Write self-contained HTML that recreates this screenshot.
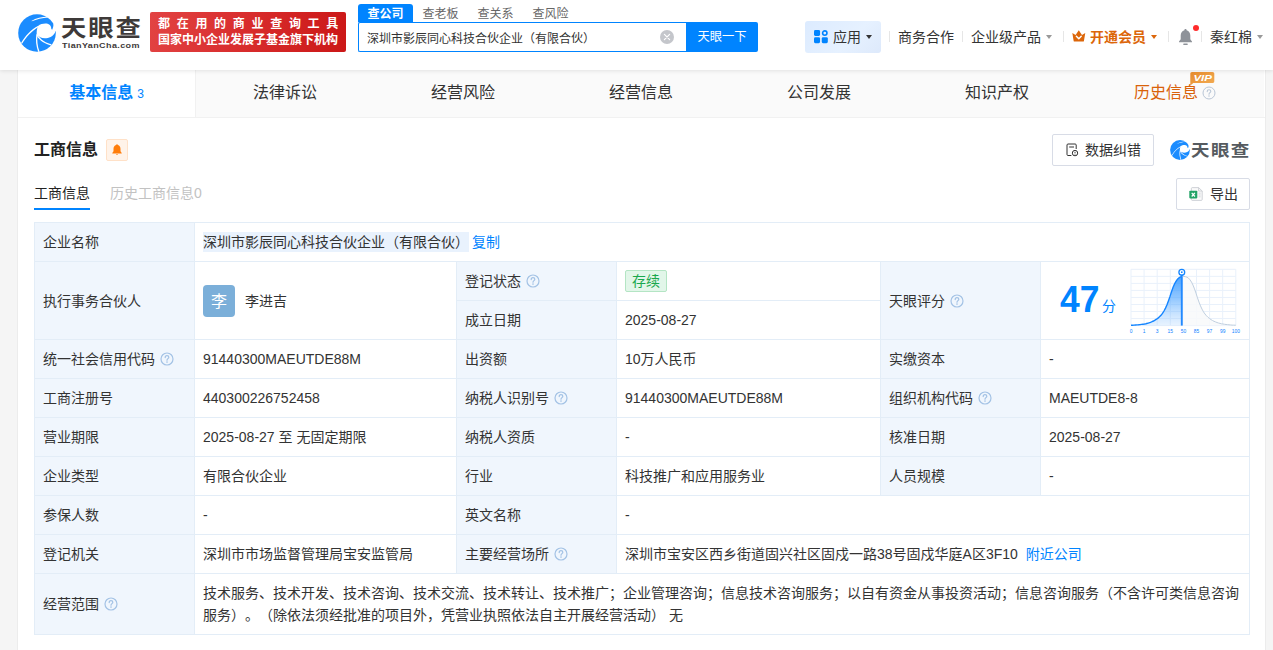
<!DOCTYPE html>
<html lang="zh-CN">
<head>
<meta charset="utf-8">
<title>天眼查 - 深圳市影辰同心科技合伙企业（有限合伙）</title>
<style>
*{box-sizing:border-box;margin:0;padding:0}
html,body{width:1273px;height:650px;overflow:hidden}
body{text-spacing-trim:space-all;background:#f5f5f5;font-family:"Liberation Sans","Noto Sans CJK SC",sans-serif;font-size:14px;color:#333;position:relative}
.abs{position:absolute}
/* ---------- header ---------- */
#hd{position:absolute;left:0;top:0;width:1273px;height:70px;background:#fff;box-shadow:0 1px 4px rgba(0,0,0,.10);z-index:5}
#logo-ic{left:18px;top:14px;width:38px;height:38px}
#logo-cn{left:61px;top:11px;font-size:23px;line-height:34px;font-weight:700;color:#3e3a39;letter-spacing:1.73px;white-space:nowrap;transform:scaleX(1.1);transform-origin:0 0}
#logo-en{left:62px;top:40px;font-size:7.5px;line-height:12px;font-weight:700;color:#3e3a39;letter-spacing:.33px;white-space:nowrap;transform:scaleX(1.2);transform-origin:0 0}
#slogan{left:150px;top:12px;width:196px;height:40px;border-radius:2px;background:linear-gradient(100deg,#e24343 0%,#d82c2c 50%,#cb1717 100%);color:#fff;font-weight:700;font-size:12px;line-height:16px;padding:4px 0 0 8px;white-space:nowrap}
#slogan .l1{letter-spacing:6.7px}
.stab{top:4px;height:18px;width:55px;text-align:center;font-size:12px;line-height:18px;padding-top:1px;overflow:hidden;color:#666}
.stab.on{background:#0084ff;color:#fff;font-weight:700;border-radius:3px 3px 0 0}
#sinput{left:358px;top:22px;width:329px;height:30px;border:1px solid #0084ff;border-right:0;border-radius:2px 0 0 2px;background:#fff;font-size:12px;line-height:32px;padding-left:8px;color:#333;white-space:nowrap;overflow:hidden}
#sbtn{left:686px;top:22px;width:72px;height:30px;background:#0084ff;color:#fff;font-size:12.3px;line-height:30px;text-align:center;border-radius:0 2px 2px 0}
#sclear{left:660px;top:30px;width:14px;height:14px}
.nav{top:26px;height:22px;line-height:22px;font-size:14px;color:#333;white-space:nowrap}
.vdiv{top:31px;width:1px;height:11px;background:#e6e6e6}
.caret{width:0;height:0;border-left:3.5px solid transparent;border-right:3.5px solid transparent;border-top:4px solid #999}
#app{left:805px;top:21px;width:76px;height:32px;border-radius:3px;background:linear-gradient(135deg,#dcebff 0%,#e6f1ff 60%,#dde9fb 100%)}
/* ---------- main ---------- */
#main{position:absolute;left:18px;top:70px;width:1247px;height:580px;background:#fff;box-shadow:-1px 0 0 #ececec,1px 0 0 #ececec}
#tabs{position:absolute;left:0;top:0;width:1247px;height:48px;background:#fff;border-bottom:1px solid #f1f1f1}
.tab{position:absolute;top:0;height:47px;width:178px;text-align:center;font-size:16px;line-height:45px;color:#333;white-space:nowrap;background:#fafafa}
.tab.on{background:#fff;color:#0084ff;font-weight:700;border-right:1px solid #f1f1f1;width:178px}
.tab.on small{font-size:12px;font-weight:400;margin-left:4px}
.tab.vip{color:#d9620a}
#sec-title{left:34px;top:138px;font-size:16px;line-height:24px;font-weight:700;color:#222}
#sec-bell{left:106px;top:139px;width:22px;height:22px;border:1px solid #ffe1c8;border-radius:2px;background:#fff3e9}
.sub{top:182px;font-size:14px;line-height:22px;white-space:nowrap}
#sub-line{left:34px;top:208px;width:56px;height:2px;background:#0084ff}
.btn{border:1px solid #d8dce6;border-radius:2px;background:#fff;font-size:14px;color:#333;white-space:nowrap}

#info{left:34px;top:222px;width:1216px;table-layout:fixed;border-collapse:separate;border-spacing:0;border-right:1px solid #e3edf7;border-bottom:1px solid #e3edf7;font-size:14px;line-height:22px;color:#333}
#info td{border-left:1px solid #e3edf7;border-top:1px solid #e3edf7;padding:8px 8px 8px 8px;vertical-align:middle;background:#fff;word-break:break-all}
#info td.k{background:#f0f6fd}
.q{width:14px;height:14px;vertical-align:-2px;margin-left:5px}
.hl{background:#e9f2fd;padding:2px 0}
.lnk{color:#0084ff}
.ava{display:inline-block;width:32px;height:32px;border-radius:4px;background:#7bafd9;color:#fff;font-size:16px;line-height:33px;text-align:center;vertical-align:middle}
.pname{vertical-align:middle;margin-left:10px}
.tag{display:inline-block;height:22px;line-height:20px;padding:0 6px;border:1px solid #b4e5c4;border-radius:2px;background:#e2f6e9;color:#1aa84d;font-size:14px;vertical-align:top;position:relative;top:0}
.score{left:1060.3px;top:278.4px;transform:scale(1.012,1.078);transform-origin:0 0;font-size:35px;font-weight:700;color:#0084ff;line-height:40px;white-space:nowrap}
.fen{left:1102px;top:295px;font-size:14px;line-height:22px;color:#0084ff}
</style>
</head>
<body>

<div id="hd">
  <!-- logo -->
  <svg id="logo-ic" class="abs" viewBox="0 0 38 38"><g>
    <circle cx="19" cy="19" r="18.8" fill="#1b8cff"/>
    <path d="M20.1 11.9 C22.6 10 26.5 9.2 29.6 9.8 C32 10.4 33.4 12.6 33.3 14.9 L34.2 15.7 C35 14 35.6 12 35.4 9.6 L39 9 L39 17 L37.6 16.9 C36.8 19.6 35 21.6 32.6 22.9 C29.5 24.5 25 24.6 22.2 23.3 C20.6 22.5 19.3 21.3 18.7 20.1 C18.5 17 19.1 14 20.1 11.9Z" fill="#fff"/>
    <path d="M3.1 28.9 C7 22 13 15.5 20.3 11.7 L20.6 12.9 C14 16.5 8 23 3.9 29.9Z" fill="#fff"/>
    <path d="M20.2 37.9 C18.1 32 17.4 26 18.4 20 L19.7 20.4 C18.7 26 19.5 32 21.5 37.6Z" fill="#fff"/>
    <path d="M33.6 30.2 C28.5 29.2 22.5 26 19.3 20.2 L18.7 21.6 C21.5 26.9 27.5 30.3 32.8 31.4Z" fill="#fff"/>
    <path d="M13.4 6.9 C18 4.2 24 2.9 29.5 2.8 L30.1 3.5 C24.5 3.8 18.5 5.3 13.9 7.3Z" fill="#fff"/>
  </g></svg>
  <div id="logo-cn" class="abs">天眼查</div>
  <div id="logo-en" class="abs">TianYanCha.com</div>
  <div id="slogan" class="abs"><div class="l1">都在用的商业查询工具</div><div class="l2">国家中小企业发展子基金旗下机构</div></div>

  <!-- search -->
  <div class="abs stab on" style="left:358px">查公司</div>
  <div class="abs stab" style="left:413px">查老板</div>
  <div class="abs stab" style="left:468px">查关系</div>
  <div class="abs stab" style="left:523px">查风险</div>
  <div id="sinput" class="abs">深圳市影辰同心科技合伙企业（有限合伙）</div>
  <svg id="sclear" class="abs" viewBox="0 0 14 14"><circle cx="7" cy="7" r="7" fill="#c4c6cb"/><path d="M4.4 4.4 L9.6 9.6 M9.6 4.4 L4.4 9.6" stroke="#fff" stroke-width="1.2" stroke-linecap="round"/></svg>
  <div id="sbtn" class="abs">天眼一下</div>

  <!-- right nav -->
  <div id="app" class="abs"></div>
  <svg class="abs" style="left:814px;top:30.3px;width:14.2px;height:13.4px" viewBox="0 0 15 14">
    <rect x="0" y="0" width="6.4" height="6.2" rx="1.4" fill="#0084ff"/>
    <rect x="0" y="7.6" width="6.4" height="6.2" rx="1.4" fill="#0084ff"/>
    <rect x="8.2" y="7.6" width="6.4" height="6.2" rx="1.4" fill="#0084ff"/>
    <circle cx="11.4" cy="3.1" r="2.3" fill="none" stroke="#0084ff" stroke-width="1.7"/>
  </svg>
  <div class="abs nav" style="left:833px">应用</div>
  <div class="abs caret" style="left:866px;top:35px;border-top-color:#333"></div>
  <div class="abs vdiv" style="left:889px"></div>
  <div class="abs nav" style="left:898px">商务合作</div>
  <div class="abs vdiv" style="left:962px"></div>
  <div class="abs nav" style="left:971px">企业级产品</div>
  <div class="abs caret" style="left:1046px;top:35px"></div>
  <div class="abs vdiv" style="left:1063px"></div>
  <svg class="abs" style="left:1072.2px;top:30.3px;width:13.6px;height:11.6px" viewBox="0 0 14 12">
    <path d="M0.3 3 L3.7 5.3 L7 0.2 L10.3 5.3 L13.7 3 L12.3 11.4 Q12.2 12 11.6 12 L2.4 12 Q1.8 12 1.7 11.4 Z" fill="#dc660a"/>
    <path d="M4.5 6.4 L7 9 L9.5 6.4" fill="none" stroke="#fff" stroke-width="1.5" stroke-linecap="round" stroke-linejoin="round"/>
  </svg>
  <div class="abs nav" style="left:1090px;color:#dc660a;font-weight:700">开通会员</div>
  <div class="abs caret" style="left:1151px;top:35px;border-top-color:#dc660a"></div>
  <div class="abs vdiv" style="left:1168px"></div>
  <svg class="abs" style="left:1178px;top:28px;width:15px;height:18px" viewBox="0 0 15 18">
    <path d="M7.5 1 C8.2 1 8.6 1.5 8.6 2.2 C11 2.9 12.3 5 12.3 7.6 L12.3 11.2 L14 13.6 L14 14.2 L1 14.2 L1 13.6 L2.7 11.2 L2.7 7.6 C2.7 5 4 2.9 6.4 2.2 C6.4 1.5 6.8 1 7.5 1Z" fill="#8e9299"/>
    <rect x="5.2" y="15.6" width="4.6" height="1.3" rx=".6" fill="#8e9299"/>
  </svg>
  <div class="abs" style="left:1193px;top:25px;width:6px;height:6px;border-radius:50%;background:#ff2b2b"></div>
  <div class="abs vdiv" style="left:1201px"></div>
  <div class="abs nav" style="left:1210px">秦红棉</div>
  <div class="abs caret" style="left:1257px;top:35px"></div>
</div>

<div id="main">
  <div id="tabs">
    <div class="tab on" style="left:0">基本信息<small>3</small></div>
    <div class="tab" style="left:178px">法律诉讼</div>
    <div class="tab" style="left:356px">经营风险</div>
    <div class="tab" style="left:534px">经营信息</div>
    <div class="tab" style="left:712px">公司发展</div>
    <div class="tab" style="left:890px">知识产权</div>
    <div class="tab vip" style="left:1068px;padding-right:18px">历史信息</div>
  </div>
</div>

<!-- section header (page coordinates) -->
<div id="sec-title" class="abs">工商信息</div>
<div id="sec-bell" class="abs"></div>
<div class="abs sub" style="left:34px;color:#222">工商信息</div>
<div class="abs sub" style="left:110px;color:#c2c2c2">历史工商信息0</div>
<div id="sub-line" class="abs"></div>


<table id="info" class="abs" cellspacing="0" cellpadding="0">
<colgroup><col style="width:160px"><col style="width:262px"><col style="width:160px"><col style="width:264px"><col style="width:160px"><col style="width:209px"></colgroup>
<tr><td class="k">企业名称</td><td colspan="5"><span class="hl">深圳市影辰同心科技合伙企业（有限合伙）</span><span class="lnk" style="margin-left:3px">复制</span></td></tr>
<tr><td class="k" rowspan="2">执行事务合伙人</td><td rowspan="2"><span class="ava">李</span><span class="pname">李进吉</span></td><td class="k">登记状态<svg class="q" viewBox="0 0 14 14"><circle cx="7" cy="7" r="6" fill="none" stroke="#a3c2e5" stroke-width="1.2"/><path d="M5.2 5.6 C5.2 4.3 6 3.7 7 3.7 C8.1 3.7 8.8 4.4 8.8 5.3 C8.8 6.6 7 6.7 7 8.2" fill="none" stroke="#a3c2e5" stroke-width="1.25" stroke-linecap="round"/><circle cx="7" cy="10.1" r=".8" fill="#a3c2e5"/></svg></td><td><span class="tag">存续</span></td><td class="k" rowspan="2">天眼评分<svg class="q" viewBox="0 0 14 14"><circle cx="7" cy="7" r="6" fill="none" stroke="#a3c2e5" stroke-width="1.2"/><path d="M5.2 5.6 C5.2 4.3 6 3.7 7 3.7 C8.1 3.7 8.8 4.4 8.8 5.3 C8.8 6.6 7 6.7 7 8.2" fill="none" stroke="#a3c2e5" stroke-width="1.25" stroke-linecap="round"/><circle cx="7" cy="10.1" r=".8" fill="#a3c2e5"/></svg></td><td rowspan="2"></td></tr>
<tr><td class="k">成立日期</td><td>2025-08-27</td></tr>
<tr><td class="k">统一社会信用代码<svg class="q" viewBox="0 0 14 14"><circle cx="7" cy="7" r="6" fill="none" stroke="#a3c2e5" stroke-width="1.2"/><path d="M5.2 5.6 C5.2 4.3 6 3.7 7 3.7 C8.1 3.7 8.8 4.4 8.8 5.3 C8.8 6.6 7 6.7 7 8.2" fill="none" stroke="#a3c2e5" stroke-width="1.25" stroke-linecap="round"/><circle cx="7" cy="10.1" r=".8" fill="#a3c2e5"/></svg></td><td>91440300MAEUTDE88M</td><td class="k">出资额</td><td>10万人民币</td><td class="k">实缴资本</td><td>-</td></tr>
<tr><td class="k">工商注册号</td><td>440300226752458</td><td class="k">纳税人识别号<svg class="q" viewBox="0 0 14 14"><circle cx="7" cy="7" r="6" fill="none" stroke="#a3c2e5" stroke-width="1.2"/><path d="M5.2 5.6 C5.2 4.3 6 3.7 7 3.7 C8.1 3.7 8.8 4.4 8.8 5.3 C8.8 6.6 7 6.7 7 8.2" fill="none" stroke="#a3c2e5" stroke-width="1.25" stroke-linecap="round"/><circle cx="7" cy="10.1" r=".8" fill="#a3c2e5"/></svg></td><td>91440300MAEUTDE88M</td><td class="k">组织机构代码<svg class="q" viewBox="0 0 14 14"><circle cx="7" cy="7" r="6" fill="none" stroke="#a3c2e5" stroke-width="1.2"/><path d="M5.2 5.6 C5.2 4.3 6 3.7 7 3.7 C8.1 3.7 8.8 4.4 8.8 5.3 C8.8 6.6 7 6.7 7 8.2" fill="none" stroke="#a3c2e5" stroke-width="1.25" stroke-linecap="round"/><circle cx="7" cy="10.1" r=".8" fill="#a3c2e5"/></svg></td><td>MAEUTDE8-8</td></tr>
<tr><td class="k">营业期限</td><td>2025-08-27 至 无固定期限</td><td class="k">纳税人资质</td><td>-</td><td class="k">核准日期</td><td>2025-08-27</td></tr>
<tr><td class="k">企业类型</td><td>有限合伙企业</td><td class="k">行业</td><td>科技推广和应用服务业</td><td class="k">人员规模</td><td>-</td></tr>
<tr><td class="k">参保人数</td><td>-</td><td class="k">英文名称</td><td colspan="3">-</td></tr>
<tr><td class="k">登记机关</td><td>深圳市市场监督管理局宝安监管局</td><td class="k">主要经营场所<svg class="q" viewBox="0 0 14 14"><circle cx="7" cy="7" r="6" fill="none" stroke="#a3c2e5" stroke-width="1.2"/><path d="M5.2 5.6 C5.2 4.3 6 3.7 7 3.7 C8.1 3.7 8.8 4.4 8.8 5.3 C8.8 6.6 7 6.7 7 8.2" fill="none" stroke="#a3c2e5" stroke-width="1.25" stroke-linecap="round"/><circle cx="7" cy="10.1" r=".8" fill="#a3c2e5"/></svg></td><td colspan="3">深圳市宝安区西乡街道固兴社区固戍一路38号固戍华庭A区3F10<span class="lnk" style="margin-left:8px">附近公司</span></td></tr>
<tr><td class="k">经营范围<svg class="q" viewBox="0 0 14 14"><circle cx="7" cy="7" r="6" fill="none" stroke="#a3c2e5" stroke-width="1.2"/><path d="M5.2 5.6 C5.2 4.3 6 3.7 7 3.7 C8.1 3.7 8.8 4.4 8.8 5.3 C8.8 6.6 7 6.7 7 8.2" fill="none" stroke="#a3c2e5" stroke-width="1.25" stroke-linecap="round"/><circle cx="7" cy="10.1" r=".8" fill="#a3c2e5"/></svg></td><td colspan="5">技术服务、技术开发、技术咨询、技术交流、技术转让、技术推广；企业管理咨询；信息技术咨询服务；以自有资金从事投资活动；信息咨询服务（不含许可类信息咨询服务）。（除依法须经批准的项目外，凭营业执照依法自主开展经营活动） 无</td></tr>
</table>
<svg class="abs" id="chart" style="left:1126px;top:264px;width:120px;height:74px" viewBox="0 0 120 74">
<defs><linearGradient id="gl" x1="0" y1="0" x2="0" y2="1"><stop offset="0" stop-color="#2f95ff" stop-opacity=".85"/><stop offset=".45" stop-color="#4aa3ff" stop-opacity=".6"/><stop offset="1" stop-color="#8cc4ff" stop-opacity=".2"/></linearGradient></defs>
<g stroke="#e9f1fb" stroke-width="1" fill="none"><path d="M5.00 5.3 V61.6"/><path d="M18.10 5.3 V61.6"/><path d="M31.20 5.3 V61.6"/><path d="M44.30 5.3 V61.6"/><path d="M57.40 5.3 V61.6"/><path d="M70.50 5.3 V61.6"/><path d="M83.60 5.3 V61.6"/><path d="M96.70 5.3 V61.6"/><path d="M109.80 5.3 V61.6"/><path d="M5.0 5.30 H109.8"/><path d="M5.0 12.34 H109.8"/><path d="M5.0 19.38 H109.8"/><path d="M5.0 26.41 H109.8"/><path d="M5.0 33.45 H109.8"/><path d="M5.0 40.49 H109.8"/><path d="M5.0 47.53 H109.8"/><path d="M5.0 54.56 H109.8"/><path d="M5.0 61.60 H109.8"/></g>
<path d="M55.8 12.6 L56.5 12.5 L58.0 12.4 L59.5 12.7 L61.0 13.2 L62.5 14.1 L64.0 15.8 L65.5 18.1 L67.0 21.1 L68.5 24.9 L70.0 29.2 L71.5 33.9 L73.0 38.1 L74.5 41.9 L76.0 45.1 L77.5 47.9 L79.0 50.0 L80.5 51.8 L82.0 53.3 L83.5 54.5 L85.0 55.6 L86.5 56.5 L88.0 57.3 L89.5 57.9 L91.0 58.5 L92.5 59.0 L94.0 59.4 L95.5 59.8 L97.0 60.0 L98.5 60.3 L100.0 60.5 L101.5 60.6 L103.0 60.8 L104.5 60.9 L106.0 61.1 L107.5 61.1 L109.0 61.2 L109.8 61.2 L109.8 61.6 L55.8 61.6 Z" fill="#f8f9fa" fill-opacity=".85"/>
<path d="M5.0 61.2 L6.5 61.2 L8.0 61.1 L9.5 61.0 L11.0 60.9 L12.5 60.8 L14.0 60.6 L15.5 60.4 L17.0 60.2 L18.5 60.0 L20.0 59.7 L21.5 59.3 L23.0 58.8 L24.5 58.3 L26.0 57.7 L27.5 57.0 L29.0 56.2 L30.5 55.2 L32.0 54.1 L33.5 52.8 L35.0 51.2 L36.5 49.4 L38.0 47.0 L39.5 44.1 L41.0 40.8 L42.5 36.7 L44.0 32.4 L45.5 27.7 L47.0 23.6 L48.5 20.0 L50.0 17.3 L51.5 15.1 L53.0 13.8 L54.5 13.0 L55.8 12.6 L55.8 61.6 L5.0 61.6 Z" fill="url(#gl)"/>
<path d="M55.8 12.6 L56.5 12.5 L58.0 12.4 L59.5 12.7 L61.0 13.2 L62.5 14.1 L64.0 15.8 L65.5 18.1 L67.0 21.1 L68.5 24.9 L70.0 29.2 L71.5 33.9 L73.0 38.1 L74.5 41.9 L76.0 45.1 L77.5 47.9 L79.0 50.0 L80.5 51.8 L82.0 53.3 L83.5 54.5 L85.0 55.6 L86.5 56.5 L88.0 57.3 L89.5 57.9 L91.0 58.5 L92.5 59.0 L94.0 59.4 L95.5 59.8 L97.0 60.0 L98.5 60.3 L100.0 60.5 L101.5 60.6 L103.0 60.8 L104.5 60.9 L106.0 61.1 L107.5 61.1 L109.0 61.2 L109.8 61.2" fill="none" stroke="#c0cfdf" stroke-width="1"/>
<path d="M5.0 61.2 L6.5 61.2 L8.0 61.1 L9.5 61.0 L11.0 60.9 L12.5 60.8 L14.0 60.6 L15.5 60.4 L17.0 60.2 L18.5 60.0 L20.0 59.7 L21.5 59.3 L23.0 58.8 L24.5 58.3 L26.0 57.7 L27.5 57.0 L29.0 56.2 L30.5 55.2 L32.0 54.1 L33.5 52.8 L35.0 51.2 L36.5 49.4 L38.0 47.0 L39.5 44.1 L41.0 40.8 L42.5 36.7 L44.0 32.4 L45.5 27.7 L47.0 23.6 L48.5 20.0 L50.0 17.3 L51.5 15.1 L53.0 13.8 L54.5 13.0 L55.8 12.6" fill="none" stroke="#1485ff" stroke-width="1.4"/>
<path d="M55.8 12.5 V61.6" stroke="#2189ff" stroke-width="1.9"/>
<circle cx="55.8" cy="8.2" r="2.9" fill="#fff" stroke="#1485ff" stroke-width="1.3"/>
<circle cx="55.8" cy="8.2" r=".9" fill="#1485ff"/>
<path d="M54.1 10.7 L55.8 13.2 L57.5 10.7Z" fill="#1485ff"/>
<g font-family="Liberation Sans, sans-serif" font-size="4.9" fill="#0f7fff" text-anchor="middle"><text x="5.0" y="69.1">0</text><text x="18.1" y="69.1">1</text><text x="31.2" y="69.1">3</text><text x="44.3" y="69.1">15</text><text x="57.4" y="69.1">50</text><text x="70.5" y="69.1">85</text><text x="83.6" y="69.1">97</text><text x="96.7" y="69.1">99</text><text x="109.8" y="69.1">100</text></g>
</svg>


<div class="abs score">47</div><div class="abs fen">分</div>

<!-- bell in section title -->
<svg class="abs" style="left:112px;top:144px;width:10px;height:11px" viewBox="0 0 10 11">
  <path d="M5 .2 C5.5 .2 5.9 .6 5.9 1.1 C7.6 1.6 8.5 3.1 8.5 4.9 V7.3 L9.7 8.9 V9.5 H.3 V8.9 L1.5 7.3 V4.9 C1.5 3.1 2.4 1.6 4.1 1.1 C4.1 .6 4.5 .2 5 .2Z" fill="#ff7d0a"/>
  <path d="M4.1 9.9 H5.9 C5.9 10.5 5.5 10.8 5 10.8 C4.5 10.8 4.1 10.5 4.1 9.9Z" fill="#ff7d0a"/>
</svg>

<!-- right buttons -->
<div class="abs btn" style="left:1052px;top:134px;width:102px;height:32px;line-height:30px;padding-left:32px">数据纠错</div>
<svg class="abs" style="left:1066px;top:143px;width:13px;height:14px" viewBox="0 0 13 14">
  <path d="M5.4 12.5 H2 C1.4 12.5 1 12.1 1 11.5 V2 C1 1.4 1.4 1 2 1 H9.2 C9.8 1 10.2 1.4 10.2 2 V6" fill="none" stroke="#333" stroke-width="1"/>
  <path d="M3.2 4 H8" stroke="#333" stroke-width="1"/>
  <circle cx="9" cy="10.1" r="2.7" fill="none" stroke="#333" stroke-width="1"/>
  <path d="M9 8.8 V10.4 M9 11.1 V11.6" stroke="#333" stroke-width=".9"/>
</svg>
<svg class="abs" style="left:1170px;top:140px;width:20px;height:20px" viewBox="0 0 38 38">
  <g><circle cx="19" cy="19" r="18.8" fill="#1b8cff"/>
    <path d="M20.1 11.9 C22.6 10 26.5 9.2 29.6 9.8 C32 10.4 33.4 12.6 33.3 14.9 L34.2 15.7 C35 14 35.6 12 35.4 9.6 L39 9 L39 17 L37.6 16.9 C36.8 19.6 35 21.6 32.6 22.9 C29.5 24.5 25 24.6 22.2 23.3 C20.6 22.5 19.3 21.3 18.7 20.1 C18.5 17 19.1 14 20.1 11.9Z" fill="#fff"/>
    <path d="M3.1 28.9 C7 22 13 15.5 20.3 11.7 L20.6 12.9 C14 16.5 8 23 3.9 29.9Z" fill="#fff"/>
    <path d="M20.2 37.9 C18.1 32 17.4 26 18.4 20 L19.7 20.4 C18.7 26 19.5 32 21.5 37.6Z" fill="#fff"/>
    <path d="M33.6 30.2 C28.5 29.2 22.5 26 19.3 20.2 L18.7 21.6 C21.5 26.9 27.5 30.3 32.8 31.4Z" fill="#fff"/>
    <path d="M13.4 6.9 C18 4.2 24 2.9 29.5 2.8 L30.1 3.5 C24.5 3.8 18.5 5.3 13.9 7.3Z" fill="#fff"/></g>
</svg>
<div class="abs" style="left:1191px;top:138.4px;font-size:16px;line-height:26px;font-weight:700;color:#565b60;letter-spacing:1.23px;white-space:nowrap;transform:scaleX(1.155);transform-origin:0 0">天眼查</div>
<div class="abs btn" style="left:1176px;top:178px;width:74px;height:32px;line-height:30px;padding-left:33px">导出</div>
<svg class="abs" style="left:1189px;top:187px;width:14px;height:14px" viewBox="0 0 14 14">
  <path d="M3.2 .6 H9.6 L13.2 4 V12.6 C13.2 13 12.9 13.4 12.4 13.4 H3.2 C2.8 13.4 2.4 13 2.4 12.6 V1.4 C2.4 1 2.8 .6 3.2 .6Z" fill="#fafafa" stroke="#c9cdd3" stroke-width=".9"/>
  <path d="M9.6 .6 V4 H13.2" fill="none" stroke="#c9cdd3" stroke-width=".9"/>
  <path d="M9.6 6.2 H11.6 M9.6 8 H11.6 M9.6 9.8 H11.6" stroke="#c9cdd3" stroke-width=".8"/>
  <rect x=".3" y="3.8" width="8" height="7.6" rx=".8" fill="#21a366"/>
  <path d="M2.7 5.8 L5.9 9.5 M5.9 5.8 L2.7 9.5" stroke="#fff" stroke-width="1.2"/>
</svg>

<!-- VIP badge + ? on history tab -->
<svg class="abs" style="left:1190px;top:72px;width:25px;height:14px;z-index:6" viewBox="0 0 25 14">
  <defs><linearGradient id="vg" x1="0" y1="0" x2="1" y2="1"><stop offset="0" stop-color="#e58a2c"/><stop offset="1" stop-color="#f3ad55"/></linearGradient></defs>
  <path d="M2 0 H22.5 C23.6 0 24.3 .8 24.3 1.8 V9.2 C24.3 10.2 23.6 11 22.5 11 H3.4 L.3 13.6 V1.8 C.3 .8 1 0 2 0Z" fill="url(#vg)"/>
  <text x="3.4" y="8.7" font-family="Liberation Sans, sans-serif" font-size="8.8" font-weight="700" font-style="italic" fill="#fff" textLength="18.6" lengthAdjust="spacingAndGlyphs">VIP</text>
</svg>
<svg class="abs" style="left:1202px;top:86px;width:14px;height:14px;z-index:6" viewBox="0 0 14 14"><circle cx="7" cy="7" r="6" fill="none" stroke="#b9c6d6" stroke-width="1"/><path d="M5.2 5.6 C5.2 4.3 6 3.7 7 3.7 C8.1 3.7 8.8 4.4 8.8 5.3 C8.8 6.6 7 6.7 7 8.2" fill="none" stroke="#b9c6d6" stroke-width="1.1" stroke-linecap="round"/><circle cx="7" cy="10.1" r=".75" fill="#b9c6d6"/></svg>

</body>
</html>
